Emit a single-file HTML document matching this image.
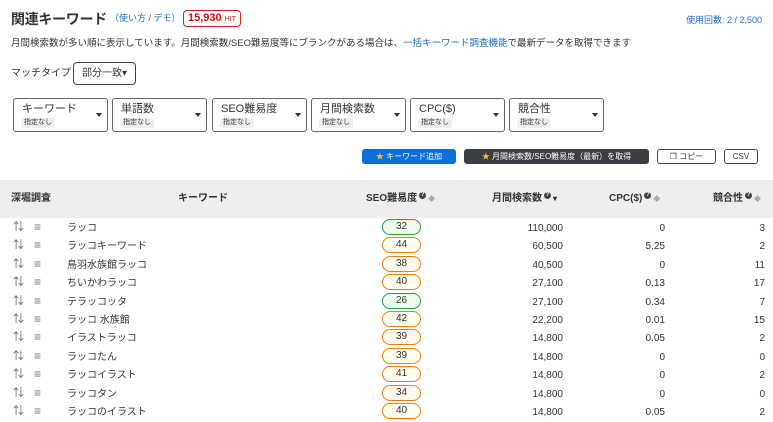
<!DOCTYPE html>
<html><head><meta charset="utf-8"><style>
*{box-sizing:border-box;margin:0;padding:0}
body{width:773px;height:420px;overflow:hidden;background:#fff;font-family:"Liberation Sans","Noto Sans CJK JP",sans-serif;color:#333;position:relative;font-size:10px}
.a{position:absolute;white-space:nowrap}
.f{position:absolute;top:98px;width:95px;height:34px;border:1px solid #666;border-radius:3px}
.f .t{position:absolute;left:8px;top:3px;font-size:11px;line-height:14px;color:#333}
.f .s{position:absolute;left:7px;top:19px;font-size:7px;line-height:10px;background:#eee;border-radius:3px;padding:0 3px;color:#333}
.f .c{position:absolute;right:5px;top:14px;width:0;height:0;border-left:3.5px solid transparent;border-right:3.5px solid transparent;border-top:4px solid #333}
.hd{position:absolute;top:180px;left:0;width:773px;height:38px;background:#eee}
.th{position:absolute;top:192px;font-size:10px;line-height:14px;font-weight:bold;color:#333;white-space:nowrap}
.q{display:inline-block;width:7px;height:7px;border-radius:50%;background:#444;color:#fff;font-size:6px;line-height:7px;text-align:center;vertical-align:top;margin-left:2px}
.so{display:inline-block;color:#aaa;font-size:7px;margin-left:2px}
.r{position:absolute;left:0;width:773px;height:18px;font-size:10px;line-height:18px}
.r span{position:absolute;top:2px;white-space:nowrap}
.r span.i{top:0}
.b{position:absolute;left:382px;top:1px;width:39px;height:16px;border:1.5px solid #f07d12;border-radius:8px;background:#fffdf0;text-align:center;font-size:10px;line-height:13px}
.b.g{border-color:#2e9a3c;background:#effbef}
.btn{position:absolute;top:149px;height:15px;border-radius:3px;font-size:8px;line-height:15px;text-align:center;white-space:nowrap}
</style></head><body>
<div class="a" style="left:11px;top:9px;font-size:14px;line-height:20px;font-weight:bold;color:#333;letter-spacing:-0.3px">関連キーワード</div>
<div class="a" style="left:110px;top:11px;font-size:9px;line-height:14px;color:#1a6fc4">（使い方 / デモ）</div>
<div class="a" style="left:183px;top:10px;height:17px;border:1.5px solid #e01b1b;border-radius:4px;padding:0 4px;color:#d80f0f;font-weight:bold;font-size:11px;line-height:14px">15,930 <span style="font-size:7px;font-weight:normal">HIT</span></div>
<div class="a" style="right:11px;top:14px;font-size:9px;line-height:12px;color:#1a6fc4">使用回数: 2 / 2,500</div>
<div class="a" style="left:11px;top:37px;font-size:9.5px;line-height:13px;color:#333">月間検索数が多い順に表示しています。月間検索数/SEO難易度等にブランクがある場合は、<span style="color:#1a6fc4">一括キーワード調査機能</span>で最新データを取得できます</div>
<div class="a" style="left:11px;top:67px;font-size:10px;line-height:13px">マッチタイプ</div>
<div class="a" style="left:73px;top:62px;width:63px;height:23px;border:1px solid #444;border-radius:4px;font-size:10px;line-height:21px;padding-left:8px">部分一致▾</div>
<div class="f" style="left:13px"><div class="t">キーワード</div><div class="s">指定なし</div><div class="c"></div></div>
<div class="f" style="left:112px"><div class="t">単語数</div><div class="s">指定なし</div><div class="c"></div></div>
<div class="f" style="left:212px"><div class="t">SEO難易度</div><div class="s">指定なし</div><div class="c"></div></div>
<div class="f" style="left:311px"><div class="t">月間検索数</div><div class="s">指定なし</div><div class="c"></div></div>
<div class="f" style="left:410px"><div class="t">CPC($)</div><div class="s">指定なし</div><div class="c"></div></div>
<div class="f" style="left:509px"><div class="t">競合性</div><div class="s">指定なし</div><div class="c"></div></div>
<div class="btn" style="left:362px;width:94px;background:#0d6fd8;color:#fff"><span style="color:#f6c23e">★</span> キーワード追加</div>
<div class="btn" style="left:464px;width:185px;background:#3a3d42;color:#fff"><span style="color:#f6c23e">★</span> 月間検索数/SEO難易度（最新）を取得</div>
<div class="btn" style="left:657px;width:59px;border:1px solid #444;color:#333;line-height:13px">❐ コピー</div>
<div class="btn" style="left:724px;width:34px;border:1px solid #444;color:#333;line-height:13px">CSV</div>
<div class="hd"></div>
<div class="th" style="left:11px">深堀調査</div>
<div class="th" style="left:178px">キーワード</div>
<div class="th" style="left:366px">SEO難易度<span class="q">?</span><span class="so">◆</span></div>
<div class="th" style="left:492px">月間検索数<span class="q">?</span><span style="font-size:8px;margin-left:2px">▾</span></div>
<div class="th" style="left:609px">CPC($)<span class="q">?</span><span class="so">◆</span></div>
<div class="th" style="left:713px">競合性<span class="q">?</span><span class="so">◆</span></div>
<div id="rows"></div>
<script>
var d=[["ラッコ",32,"110,000","0","3",1],["ラッコキーワード",44,"60,500","5.25","2"],["鳥羽水族館ラッコ",38,"40,500","0","11"],["ちいかわラッコ",40,"27,100","0.13","17"],["テラッコッタ",26,"27,100","0.34","7",1],["ラッコ 水族館",42,"22,200","0.01","15"],["イラストラッコ",39,"14,800","0.05","2"],["ラッコたん",39,"14,800","0","0"],["ラッコイラスト",41,"14,800","0","2"],["ラッコタン",34,"14,800","0","0"],["ラッコのイラスト",40,"14,800","0.05","2"]];
var h="";d.forEach(function(x,i){var y=218+i*18.4;
h+='<div class="r" style="top:'+y+'px"><span class="i" style="left:13px;color:#666;font-size:11px">⇅</span><span class="i" style="left:34px;color:#777;font-size:12px">≡</span><span style="left:67px">'+x[0]+'</span><div class="b'+(x[5]?' g':'')+'">'+x[1]+'</div><span style="right:210px">'+x[2]+'</span><span style="right:108px">'+x[3]+'</span><span style="right:8px">'+x[4]+'</span></div>';});
document.getElementById("rows").innerHTML=h;
</script>
</body></html>
